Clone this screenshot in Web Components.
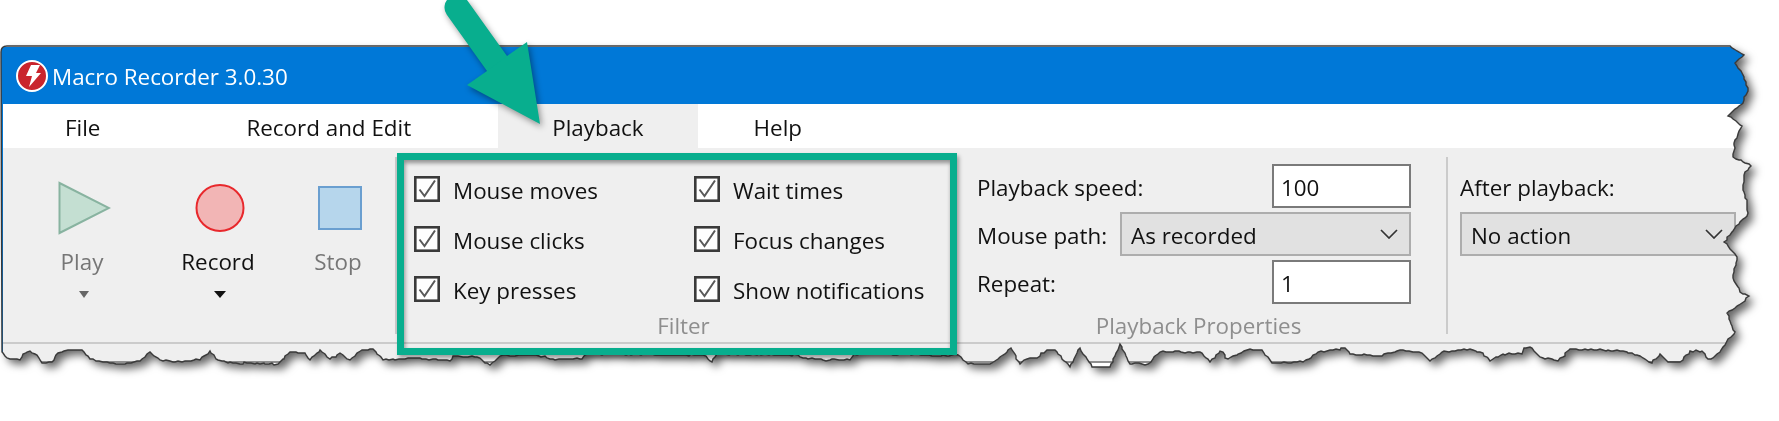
<!DOCTYPE html>
<html>
<head>
<meta charset="utf-8">
<title>Macro Recorder</title>
<style>
    body {
        margin: 0;
        background: #fff;
        color: #111;
        font: 22.4px/30px "Open Sans", sans-serif;
        overflow: hidden;
    }
</style>
</head>
<body>
<mr-window>
    <mr-titlebar>Macro Recorder 3.0.30</mr-titlebar>
    <mr-menubar>
        <mr-tab style="--pl:62px;--pr:73px">File</mr-tab>
        <mr-tab style="--pl:73px;--pr:87px">Record and Edit</mr-tab>
        <mr-tab active style="--pl:54px;--pr:54px">Playback</mr-tab>
        <mr-tab style="--pl:56px;--pr:54px">Help</mr-tab>
    </mr-menubar>
    <mr-ribbon>
        <mr-group style="width:394px;border-right:2px solid #cbcbcb">
            <mr-buttons>
                <mr-big-button disabled caret style="width:100px">
                    <svg slot="icon" width="53" height="60" viewBox="0 0 53 60"><polygon points="1.5,5 51,30 1.5,55" fill="#c4dfd2" stroke="#88b3a0" stroke-width="2"/></svg>
                    Play
                </mr-big-button>
                <mr-big-button caret style="width:172px">
                    <svg slot="icon" width="50" height="60" viewBox="0 0 50 60"><ellipse cx="25" cy="30" rx="23.5" ry="23" fill="#f2b5b5" stroke="#e8282c" stroke-width="2"/></svg>
                    Record
                </mr-big-button>
                <mr-big-button disabled style="width:68px">
                    <svg slot="icon" width="44" height="60" viewBox="0 0 44 60"><rect x="1" y="9" width="42" height="42" fill="#b6d6ec" stroke="#6a9fd0" stroke-width="2"/></svg>
                    Stop
                </mr-big-button>
            </mr-buttons>
        </mr-group>
        <mr-group style="width:573px">
            <mr-filter>
                <mr-check>Mouse moves</mr-check>
                <mr-check>Mouse clicks</mr-check>
                <mr-check>Key presses</mr-check>
                <mr-check>Wait times</mr-check>
                <mr-check>Focus changes</mr-check>
                <mr-check>Show notifications</mr-check>
            </mr-filter>
            <span slot="title">Filter</span>
        </mr-group>
        <mr-group style="width:457px;margin-right:19px">
            <mr-field style="width:434px;margin-left:7px">
                <span>Playback speed:</span>
                <mr-number>100</mr-number>
            </mr-field>
            <mr-field style="width:434px;margin-left:7px">
                <span>Mouse path:</span>
                <mr-select style="width:291px">As recorded</mr-select>
            </mr-field>
            <mr-field style="width:434px;margin-left:7px">
                <span>Repeat:</span>
                <mr-number>1</mr-number>
            </mr-field>
            <span slot="title">Playback Properties</span>
        </mr-group>
        <mr-group style="padding-left:12px;border-left:2px solid #cbcbcb">
            <mr-field style="width:276px"><span>After playback:</span></mr-field>
            <mr-field style="width:276px"><mr-select style="width:276px">No action</mr-select></mr-field>
        </mr-group>
    </mr-ribbon>
</mr-window>
<mr-callout></mr-callout>

<script>
// Torn edge of the screenshot, clockwise from the top right corner
const TORN_EDGE = [
    [1730,46],[1744,55],[1735,63],[1742,73],[1748,88],[1743,103],[1737,108],[1728,116],[1742,126],[1735,140],
    [1733,157],[1751,166],[1745,172],[1743,190],[1747,200],[1748,213],[1735,228],[1724,242],[1737,257],[1733,278],
    [1740,292],[1749,296],[1742,303],[1727,313],[1735,332],[1723,347],[1713,358],[1708,359],[1702,351],[1690,351],
    [1680,362],[1668,362],[1660,354],[1652,363],[1643,358],[1623,351],[1570,349],[1558,361],[1540,357],[1532,348],
    [1524,348],[1522,354],[1503,354],[1490,361],[1483,353],[1470,349],[1442,352],[1430,361],[1422,353],[1400,350],
    [1382,356],[1350,354],[1345,348],[1318,352],[1303,362],[1272,363],[1262,350],[1250,349],[1228,359],[1220,351],
    [1210,362],[1200,352],[1160,352],[1148,364],[1130,364],[1120,344],[1110,367],[1092,367],[1080,348],[1070,367],
    [1055,350],[1047,350],[1037,358],[1027,359],[1020,364],[1011,348],[1000,357],[990,364],[968,364],[958,355],
    [947,356],[900,354],[854,354],[850,360],[823,360],[803,358],[798,355],[717,354],[712,362],[703,355],[587,354],
    [582,359],[553,359],[533,355],[500,356],[490,365],[477,357],[453,356],[450,361],[420,358],[383,360],[373,349],
    [362,350],[350,360],[340,353],[330,359],[320,350],[310,360],[305,353],[290,352],[278,364],[257,363],[233,363],
    [218,360],[210,351],[200,360],[173,362],[160,360],[150,352],[140,361],[125,364],[103,362],[90,359],[82,350],
    [68,350],[58,353],[52,362],[42,363],[37,355],[30,351],[23,354],[20,360],[7,358],[2,352]
];

function tornPath() {
    // fine jitter between the hand read points, same result on every run
    let seed = 7;
    const rnd = () => { seed = (seed * 16807) % 2147483647; return seed / 2147483647 - 0.5; };
    let d = 'M1 52Q1 46 7 46L1730 46';
    TORN_EDGE.forEach((p, i) => {
        if (i === 0) return;
        const q = TORN_EDGE[i - 1];
        const steps = Math.max(1, Math.round(Math.hypot(p[0] - q[0], p[1] - q[1]) / 3));
        for (let s = 1; s <= steps; s++) {
            const t = s / steps;
            const j = s === steps ? 0 : 1.6;
            d += 'L' + Math.round(q[0] + (p[0] - q[0]) * t + rnd() * j) + ' ' + Math.round(q[1] + (p[1] - q[1]) * t + rnd() * j);
        }
    });
    return d + 'Z';
}

class MrWindow extends HTMLElement {
    constructor() {
        super();
        this.attachShadow({ mode: 'open' });
    }
    connectedCallback() {
        const d = tornPath();
        this.shadowRoot.innerHTML = `
            <style>
                :host { display: block; position: relative; width: 1779px; height: 421px; }
                .shadow { filter: drop-shadow(5px 5px 4px rgba(0, 0, 0, 0.6)); }
                .paper {
                    box-sizing: border-box;
                    height: 385px;
                    padding: 47px 0 0 1px;
                    background: #fff;
                    clip-path: path('${d}');
                }
                .frame { border-left: 2px solid #0078d7; }
                svg { position: absolute; left: 0; top: 0; }
            </style>
            <div class="shadow"><div class="paper"><div class="frame"><slot></slot></div></div></div>
            <svg width="1779" height="421"><path d="${d}" fill="none" stroke="#3a3a3a" stroke-width="1.4"/></svg>
        `;
    }
}

class MrTitlebar extends HTMLElement {
    constructor() {
        super();
        this.attachShadow({ mode: 'open' });
        this.shadowRoot.innerHTML = `
            <style>
                :host {
                    display: flex;
                    align-items: center;
                    gap: 4px;
                    height: 57px;
                    margin-left: -2px;
                    padding: 1px 0 0 15px;
                    box-sizing: border-box;
                    background: #0078d7;
                    color: #fff;
                }
                svg { margin-top: -1px; }
                span { padding-top: 1px; }
            </style>
            <svg width="32" height="32" viewBox="0 0 32 32">
                <circle cx="16" cy="16" r="15" fill="#c9252d" stroke="#fff" stroke-width="2"/>
                <polygon points="15,5 24,5 20,13 25,13 13,27 16,16 10,16" fill="#fff"/>
            </svg>
            <span><slot></slot></span>
        `;
    }
}

class MrMenubar extends HTMLElement {
    constructor() {
        super();
        this.attachShadow({ mode: 'open' });
        this.shadowRoot.innerHTML = `
            <style>
                :host { display: flex; height: 44px; background: #fff; }
            </style>
            <slot></slot>
        `;
    }
}

class MrTab extends HTMLElement {
    constructor() {
        super();
        this.attachShadow({ mode: 'open' });
        this.shadowRoot.innerHTML = `
            <style>
                :host {
                    display: flex;
                    align-items: center;
                    padding: 4px var(--pr) 0 var(--pl);
                    color: #111;
                    white-space: nowrap;
                }
                :host([active]) { background: #efefef; }
            </style>
            <slot></slot>
        `;
    }
}

class MrRibbon extends HTMLElement {
    constructor() {
        super();
        this.attachShadow({ mode: 'open' });
        this.shadowRoot.innerHTML = `
            <style>
                :host { display: block; background: #efefef; }
                .groups {
                    display: flex;
                    box-sizing: border-box;
                    height: 194px;
                    padding-top: 9px;
                }
                .rule { height: 2px; background: #cbcbcb; }
                .foot { height: 17px; background: #efefef; border-bottom: 2px solid #8f8f8f; }
            </style>
            <div class="groups"><slot></slot></div>
            <div class="rule"></div>
            <div class="foot"></div>
        `;
    }
}

class MrGroup extends HTMLElement {
    constructor() {
        super();
        this.attachShadow({ mode: 'open' });
        this.shadowRoot.innerHTML = `
            <style>
                :host {
                    display: flex;
                    flex-direction: column;
                    flex: none;
                    box-sizing: border-box;
                    height: 177px;
                }
                .body { flex: 1; padding-top: 7px; }
                .title {
                    margin-bottom: -2px;
                    padding-top: 2px;
                    line-height: 20px;
                    text-align: center;
                    color: #8e8e8e;
                }
            </style>
            <div class="body"><slot></slot></div>
            <div class="title"><slot name="title"></slot></div>
        `;
    }
}

class MrButtons extends HTMLElement {
    constructor() {
        super();
        this.attachShadow({ mode: 'open' });
        this.shadowRoot.innerHTML = `
            <style>
                :host { display: flex; margin: 14px 0 0 31px; }
            </style>
            <slot></slot>
        `;
    }
}

class MrBigButton extends HTMLElement {
    constructor() {
        super();
        this.attachShadow({ mode: 'open' });
        this.shadowRoot.innerHTML = `
            <style>
                :host {
                    display: flex;
                    flex-direction: column;
                    align-items: center;
                    flex: none;
                    color: #111;
                }
                :host([disabled]) { color: #767676; }
                .icon { display: flex; height: 60px; }
                .label { margin: 9px 4px 0 0; }
                .caret {
                    display: none;
                    margin-top: 14px;
                    border: 6px solid transparent;
                    border-top: 7px solid currentColor;
                    border-bottom: 0;
                }
                :host([caret]) .caret { display: block; }
                :host([disabled]) .caret { border-width: 7px 5px 0; border-top-color: #666; }
            </style>
            <div class="icon"><slot name="icon"></slot></div>
            <div class="label"><slot></slot></div>
            <div class="caret"></div>
        `;
    }
}

class MrFilter extends HTMLElement {
    constructor() {
        super();
        this.attachShadow({ mode: 'open' });
        this.shadowRoot.innerHTML = `
            <style>
                :host {
                    display: grid;
                    grid-auto-flow: column;
                    grid-template-rows: repeat(3, 26px);
                    grid-template-columns: 280px auto;
                    row-gap: 24px;
                    margin: 12px 0 0 17px;
                }
            </style>
            <slot></slot>
        `;
    }
}

class MrCheck extends HTMLElement {
    constructor() {
        super();
        this.attachShadow({ mode: 'open' });
        this.shadowRoot.innerHTML = `
            <style>
                :host {
                    display: flex;
                    align-items: center;
                    gap: 13px;
                    height: 26px;
                    white-space: nowrap;
                }
                span { padding-top: 4px; }
                svg { flex: none; }
            </style>
            <svg width="26" height="26" viewBox="0 0 26 26">
                <rect x="1.3" y="1.3" width="23.4" height="23.4" fill="#fff" stroke="#3a3a3a" stroke-width="2.6"/>
                <path d="M5.5 13.5 L10.5 20 L21 4.5" fill="none" stroke="#5a5a5a" stroke-width="2"/>
            </svg>
            <span><slot></slot></span>
        `;
    }
}

class MrField extends HTMLElement {
    constructor() {
        super();
        this.attachShadow({ mode: 'open' });
        this.shadowRoot.innerHTML = `
            <style>
                :host {
                    display: flex;
                    align-items: center;
                    justify-content: space-between;
                    height: 44px;
                    margin-bottom: 4px;
                    white-space: nowrap;
                }
                ::slotted(span) { padding-top: 4px; }
            </style>
            <slot></slot>
        `;
    }
}

class MrNumber extends HTMLElement {
    constructor() {
        super();
        this.attachShadow({ mode: 'open' });
        this.shadowRoot.innerHTML = `
            <style>
                :host {
                    display: flex;
                    align-items: center;
                    box-sizing: border-box;
                    width: 139px;
                    height: 44px;
                    padding: 4px 0 0 7px;
                    background: #fff;
                    border: 2px solid #7a7a7a;
                }
            </style>
            <slot></slot>
        `;
    }
}

class MrSelect extends HTMLElement {
    constructor() {
        super();
        this.attachShadow({ mode: 'open' });
        this.shadowRoot.innerHTML = `
            <style>
                :host {
                    display: flex;
                    align-items: center;
                    justify-content: space-between;
                    box-sizing: border-box;
                    height: 44px;
                    padding: 4px 11px 0 9px;
                    background: #e1e1e1;
                    border: 2px solid #adadad;
                }
                svg { margin-top: -4px; }
            </style>
            <span><slot></slot></span>
            <svg width="18" height="10" viewBox="0 0 18 10"><path d="M1 1 L9 9 L17 1" fill="none" stroke="#333" stroke-width="1.7"/></svg>
        `;
    }
}

class MrCallout extends HTMLElement {
    constructor() {
        super();
        this.attachShadow({ mode: 'open' });
        this.shadowRoot.innerHTML = `
            <style>
                :host { position: absolute; left: 0; top: 0; width: 1779px; height: 421px; pointer-events: none; }
                .box {
                    position: absolute;
                    left: 397px;
                    top: 153px;
                    box-sizing: border-box;
                    width: 560px;
                    height: 202px;
                    border: 7.5px solid #08ae8e;
                    box-shadow: 2px 3px 4px rgba(0, 0, 0, 0.35), inset 1px 3px 4px rgba(0, 0, 0, 0.4);
                }
                svg { position: absolute; left: 0; top: 0; filter: drop-shadow(2px 3px 3px rgba(0, 0, 0, 0.4)); }
            </style>
            <div class="box"></div>
            <svg width="1779" height="421">
                <line x1="457" y1="7.5" x2="497" y2="63.5" stroke="#08ae8e" stroke-width="25" stroke-linecap="round"/>
                <polygon points="540,124 467,85 487,71 507,56 527,42" fill="#08ae8e"/>
            </svg>
        `;
    }
}

customElements.define('mr-window', MrWindow);
customElements.define('mr-titlebar', MrTitlebar);
customElements.define('mr-menubar', MrMenubar);
customElements.define('mr-tab', MrTab);
customElements.define('mr-ribbon', MrRibbon);
customElements.define('mr-group', MrGroup);
customElements.define('mr-buttons', MrButtons);
customElements.define('mr-big-button', MrBigButton);
customElements.define('mr-filter', MrFilter);
customElements.define('mr-check', MrCheck);
customElements.define('mr-field', MrField);
customElements.define('mr-number', MrNumber);
customElements.define('mr-select', MrSelect);
customElements.define('mr-callout', MrCallout);
</script>
</body>
</html>
